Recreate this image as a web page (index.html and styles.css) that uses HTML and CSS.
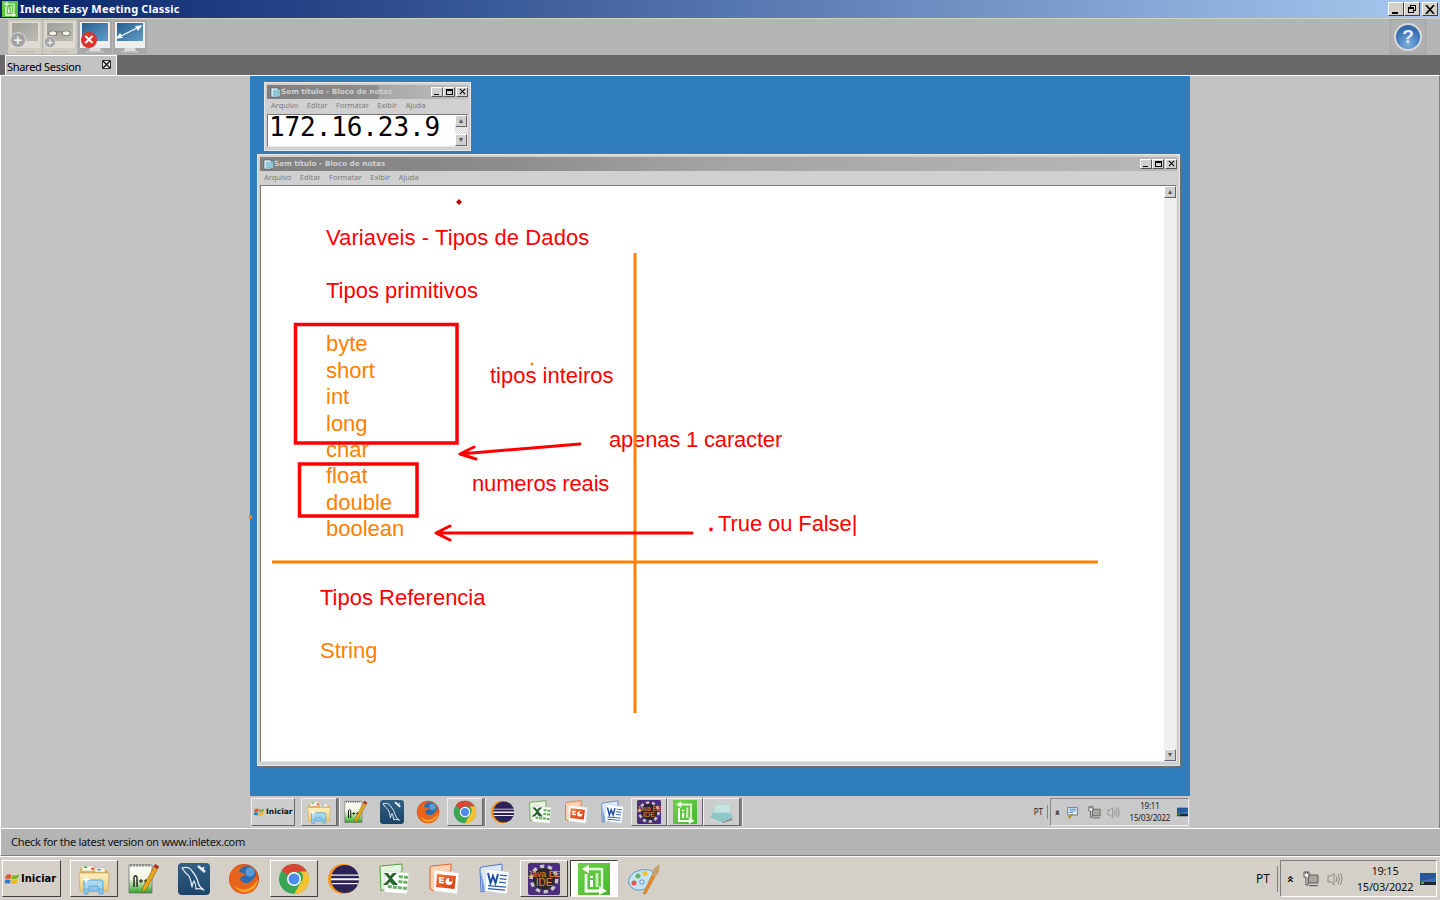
FILE: index.html
```html
<!DOCTYPE html>
<html lang="pt">
<head>
<meta charset="utf-8">
<title>Inletex Easy Meeting Classic</title>
<link rel="stylesheet" href="styles.css">
</head>
<body>
<svg class="defs" aria-hidden="true">
  <defs>
    <linearGradient id="gScreen" x1="0" y1="0" x2="1" y2="1"><stop offset="0" stop-color="#235f90"/><stop offset="1" stop-color="#659cc8"/></linearGradient>
    <linearGradient id="gGray" x1="0" y1="0" x2="1" y2="1"><stop offset="0" stop-color="#a09f98"/><stop offset="1" stop-color="#bcbbb4"/></linearGradient>
    <linearGradient id="gFolder" x1="0" y1="0" x2="0" y2="1"><stop offset="0" stop-color="#fdf0c0"/><stop offset="1" stop-color="#eccb7a"/></linearGradient>
    <linearGradient id="gNpp" x1="0" y1="0" x2="0" y2="1"><stop offset="0" stop-color="#ffffff"/><stop offset=".5" stop-color="#eef7dc"/><stop offset="1" stop-color="#2fa326"/></linearGradient>
    <linearGradient id="gSql" x1="0" y1="0" x2="0" y2="1"><stop offset="0" stop-color="#315f85"/><stop offset="1" stop-color="#1c4468"/></linearGradient>
    <linearGradient id="gPpt" x1="0" y1="0" x2="1" y2="1"><stop offset="0" stop-color="#f27a3c"/><stop offset="1" stop-color="#d8380f"/></linearGradient>
    <linearGradient id="gInl" x1="0" y1="0" x2="1" y2="1"><stop offset="0" stop-color="#6fd04a"/><stop offset="1" stop-color="#45b82e"/></linearGradient>
    <radialGradient id="gFox" cx=".45" cy=".5" r=".55"><stop offset="0" stop-color="#ffb02e"/><stop offset="1" stop-color="#d9471b"/></radialGradient>
    <symbol id="i-mac" viewBox="0 0 34 34"><path d="M2 2h30v26H2z" fill="#eeeeee"/><path d="M4 3h26v18H4z" fill="url(#gScreen)"/><path d="M12 28h10l1 3H11z" fill="#dcdcdc"/><path d="M8 31h18v1.500H8z" fill="#c4c4c4"/></symbol>
    <symbol id="i-mac-off" viewBox="0 0 34 34"><path d="M2 2h30v26H2z" fill="#dedcd4"/><path d="M4 3h26v18H4z" fill="url(#gGray)"/><path d="M12 28h10l1 3H11z" fill="#cfcdc5"/><path d="M8 31h18v1.500H8z" fill="#bdbbb3"/></symbol>
    <symbol id="i-folder" viewBox="0 0 32 32"><path d="M2 5h9l2 2h17v19H2z" fill="#d8b468"/><path d="M4 3h11v5H4zM17 5h10v4H17z" fill="#f8f6ec" stroke="#c9b480" stroke-width=".5"/><path d="M6 3.500h3v1.500H6z" fill="#39a845"/><path d="M13 5h3v1.500h-3z" fill="#d8402e"/><path d="M19 6h4v1.500h-4z" fill="#5aa0e0"/><path d="M1 10h30l-1 18H2z" fill="url(#gFolder)" stroke="#c9a458" stroke-width=".7"/><path d="M6 26v-7q0-2 2-2h15q2 0 2 2v7" fill="#a8d8f0" stroke="#5aa4d8"/><path d="M6 31v-5h5v-3h9v3h5v5h-4v-3H10v3z" fill="#8cc8ec" stroke="#4f9bd0" stroke-width=".7"/><path d="M8 12l1 3.500 3.500 1-3.500 1-1 3.500-1-3.500-3.500-1 3.500-1z" fill="#fff"/></symbol>
    <symbol id="i-npp" viewBox="0 0 32 32"><path d="M1 2h23v28H1z" fill="url(#gNpp)" stroke="#6e6e6e" stroke-width=".8"/><path d="M3 1v3M6 1v3M9 1v3M12 1v3M15 1v3M18 1v3M21 1v3" stroke="#666"/><path d="M6 24V14q1.500-2.500 3 0v10" fill="none" stroke="#111" stroke-width="1.300"/><path d="M11 18h4M13 16v4M16 18h4M18 16v4" stroke="#111" stroke-width="1"/><path d="M27 2l3.500 2-12 22-4.500 4 1-6z" fill="#e9a81c" stroke="#7c5a10" stroke-width=".6"/><path d="M27 1l4 2.300-1.500 2.700-4-2.300z" fill="#a8322a"/></symbol>
    <symbol id="i-mysql" viewBox="0 0 32 32"><rect x="0" y="0" width="32" height="32" rx="4" fill="url(#gSql)"/><path d="M4 5q7-2 10 3 5 6 6 11 1 5 6 8-5-2-8-1 0-5-2-8-2 3-2 6-1-7-3-11-4-3-7-8z" fill="none" stroke="#dfeaf4" stroke-width="1.300" stroke-linejoin="round"/><path d="M20 3l7 6" stroke="#e8f0f6" stroke-width="2.400"/><path d="M26 4l-2 3" stroke="#e8f0f6" stroke-width="1.600"/></symbol>
    <symbol id="i-fox" viewBox="0 0 32 32"><circle cx="16" cy="16" r="15" fill="url(#gFox)"/><circle cx="19" cy="12" r="9" fill="#2c6bb0"/><circle cx="22" cy="9" r="4.500" fill="#5b9bd8"/><path d="M1 17Q2 7 10 2 7 6 9 10q5-2 9 2-4 1-6 3 1 5 6 5 6 0 9-7 2 3 3 5-1 12-14 13Q3 30 1 17z" fill="#e8641c"/><path d="M6 22q6 6 13 4 7-2 11-10-1 11-12 13-8 1-12-7z" fill="#f5a623"/></symbol>
    <symbol id="i-chrome" viewBox="0 0 32 32"><circle cx="16" cy="16" r="15" fill="#3aa655"/><path d="M16 1a15 15 0 0 1 13 7.500H16a7.500 7.500 0 0 0-6.500 3.800L3.500 7A15 15 0 0 1 16 1z" fill="#dc4437"/><path d="M29 8.500A15 15 0 0 1 16 31l6.500-11.200a7.500 7.500 0 0 0 0-11.300z" fill="#fbc02d"/><circle cx="16" cy="16" r="7" fill="#fff"/><circle cx="16" cy="16" r="5.500" fill="#4b8bf0"/></symbol>
    <symbol id="i-eclipse" viewBox="0 0 32 32"><circle cx="15" cy="16" r="15" fill="#f7941e"/><circle cx="17" cy="16" r="14" fill="#2c2255"/><path d="M3 11.500h28v1.300H3zM3 15.200h28v2H3zM4 20h26v1.300H4z" fill="#f2f2f8"/></symbol>
    <symbol id="i-excel" viewBox="0 0 32 32"><path d="M2 4q0-1 1-1l21-2v7L7 26l-4 2z" fill="#e6f3e0" stroke="#4d9f3f"/><path d="M7 8l24 2-2 21-23-2z" fill="#fff" stroke="#c8d4c8" stroke-width=".6"/><path d="M21 12l4 .400-.300 3-4-.400zM26 12.500l4 .400-.300 3-4-.400zM20.500 17l4 .400-.300 3-4-.400zM25.500 17.500l4 .400-.300 3-4-.400zM10 22l4 .400-.300 3-4-.400zM15 22.500l4 .400-.300 3-4-.400zM20 23l4 .400-.300 3-4-.400zM25 23.500l4 .400-.300 3-4-.400z" fill="#6fae68"/><path d="M6 8l10 1M6 10l5 6-6 6h4l3-3 3 3h5l-6-7 5-5h-4l-3 3-2-3z" fill="#27642c"/></symbol>
    <symbol id="i-ppt" viewBox="0 0 32 32"><path d="M2 5q0-2 2-2l19-2v6L6 28l-4-2z" fill="#fbd3b0" stroke="#e8612c"/><path d="M6 7l25 3-2 21-23-3z" fill="#fff" stroke="#d8d2cc" stroke-width=".6"/><path d="M9 11l19 2-1.500 13L8 24z" fill="url(#gPpt)"/><path d="M11 14l5 .500v1.300l-3.500-.300v1l3 .300v1.300l-3-.300v1l3.500.300v1.300l-5-.500z" fill="#fff"/><circle cx="21" cy="18.500" r="3.500" fill="#fff"/><path d="M21 18.500v-3.500a3.500 3.500 0 0 1 3.500 3.500z" fill="#e24d1c"/></symbol>
    <symbol id="i-word" viewBox="0 0 32 32"><path d="M2 6q0-2 2-2l20-3v6L7 28l-4 1z" fill="#dce8f8" stroke="#4f78bf"/><path d="M3 8l4 19-3 1z" fill="#6f97d6"/><path d="M8 6l23 3-2 22-22-3z" fill="#fff" stroke="#ccd4e2" stroke-width=".6"/><path d="M10 10l2.500 10 2.500-7 2.500 7 2.500-9" fill="none" stroke="#1f4fa3" stroke-width="2"/><path d="M22 11.500l7 .700v1.300l-7-.700zM21.500 15l7 .700V17l-7-.700zM21 18.500l7 .700v1.300l-7-.700zM10 22l18 1.500v1.300L10 23.300zM10 25l17 1.500v1.300L10 26.300z" fill="#2c5cb0"/></symbol>
    <symbol id="i-java" viewBox="0 0 32 32"><rect x="0" y="0" width="32" height="32" rx="2" fill="#4a2d7c"/><circle cx="16" cy="16" r="12.500" fill="none" stroke="#c4c4c4" stroke-width="4" stroke-dasharray="4.200 3.600"/><circle cx="16" cy="16" r="11" fill="#2a2630"/><text class="java-t" x="16" y="14">Java EE</text><text class="java-t java-b" x="16" y="23">IDE</text></symbol>
    <symbol id="i-inletex" viewBox="0 0 32 32"><rect width="32" height="32" fill="url(#gInl)"/><path d="M10 6h14v20" fill="none" stroke="#e8f8dc" stroke-width="2.400"/><path d="M4 6l7-4.500v9z" fill="#f2fbe8"/><path d="M8 11v17h14" fill="none" stroke="#f8fff2" stroke-width="2.800"/><path d="M21 23l8 5-8 4z" fill="#f2fbe8"/><path d="M12 13h3v2h-3zM12 17h3v7h-3z" fill="#fff"/><path d="M17.500 10h3v14h-3z" fill="#c8eeb8"/></symbol>
    <symbol id="i-paint" viewBox="0 0 32 32"><path d="M1 21q-2-7 6-12 8-4 15-2 5 2 1 8-2 2-2 5l-4 6q-11 4-16-5z" fill="#c4e2f2" stroke="#5a9cc6"/><circle cx="6" cy="20" r="2.500" fill="#e0584a"/><circle cx="10" cy="13" r="2.500" fill="#68b060"/><circle cx="17" cy="10.500" r="2.500" fill="#f2c230"/><circle cx="14" cy="19" r="2.200" fill="#dcebf4" stroke="#5a8cc6"/><path d="M15 31l9-19 3 1.500-9 17z" fill="#e9892a" stroke="#c06a18" stroke-width=".5"/><path d="M24 12q0-6 4-8l3-3q1 6-1 10l-3 2.500z" fill="#c8a070"/></symbol>
    <symbol id="i-notes" viewBox="0 0 32 32"><path d="M2 24L9 6h18l4 18-14 6z" fill="#8ec7c9"/><path d="M9 6h18l2 11H6z" fill="#c6e4de"/><path d="M17 30l14-6v3l-14 4z" fill="#8a8a8a"/><path d="M2 24l15 6v2L2 26z" fill="#d8d8d8"/></symbol>
    <symbol id="i-flag" viewBox="0 0 16 14"><path d="M1 3q3-2 6 0l-1 4q-3-1-6 0z" fill="#e8562a"/><path d="M8 3q3 1 7-1l-1 4q-4 2-7 1z" fill="#7ab51d"/><path d="M0 8q3-1 6 0l-1 4q-3-1-6 0z" fill="#2f78d0"/><path d="M7 8q3 1 7-1l-1 4q-4 2-7 1z" fill="#f5b81c"/></symbol>
    <symbol id="i-net" viewBox="0 0 16 16"><path d="M5 4h10v8H5z" fill="#a8a69e" stroke="#555" stroke-width=".9"/><path d="M1 1h5v5H5v8H3V6H1z" fill="#f6f6f2" stroke="#444" stroke-width=".9"/><path d="M2.500 1v2M4.500 1v2" stroke="#444" stroke-width=".8"/><path d="M6 14h9v1.200H6z" fill="#666"/></symbol>
    <symbol id="i-vol" viewBox="0 0 16 16"><path d="M1 5h3l3-3v12l-3-3H1z" fill="#cfcdc6" stroke="#8a8a86"/><path d="M9 5q2 3 0 6M11 3q3 5 0 10M13 2q4 6 0 12" fill="none" stroke="#8a8a86"/></symbol>
    <symbol id="i-desk" viewBox="0 0 16 14"><path d="M0 1h16v12H0z" fill="#3b6fb4"/><path d="M0 1h16v5L0 9z" fill="#2a5797"/><path d="M0 10h16v3H0z" fill="#22252c"/><path d="M1 10h3v2H1z" fill="#58a83c"/></symbol>
    <symbol id="i-pad" viewBox="0 0 12 12"><path d="M1 1h8v10H1z" fill="#e8f4f8" stroke="#567"/><path d="M3 3h8v7H3z" fill="#8ec7d8"/></symbol>
  </defs>
</svg>

<div class="app">
  <header class="titlebar">
    <svg class="title-icon"><use href="#i-inletex"/></svg>
    <span class="title-text">Inletex Easy Meeting Classic</span>
    <div class="wincaps">
      <span class="cap"><i class="g-min"></i></span>
      <span class="cap"><i class="g-rest"></i></span>
      <span class="cap cap-gap"><svg class="g-x" viewBox="0 0 10 9"><path d="M1 0l8 9M9 0L1 9"/></svg></span>
    </div>
  </header>

  <div class="toolbar">
    <button class="tb-btn tb-off"><svg class="tb-ic"><use href="#i-mac-off"/></svg><span class="badge-plus">+</span></button>
    <button class="tb-btn tb-off"><svg class="tb-ic"><use href="#i-mac-off"/></svg><svg class="tb-glasses" viewBox="0 0 26 10"><path d="M2 4q4-3 8 0v3q-4 2-8 0zM16 4q4-3 8 0v3q-4 2-8 0zM10 4q3-1 6 0" fill="#f1f0ea" stroke="#77756e"/></svg><span class="badge-plus badge-small">+</span></button>
    <button class="tb-btn"><svg class="tb-ic"><use href="#i-mac"/></svg><span class="badge-x">×</span></button>
    <button class="tb-btn"><svg class="tb-ic"><use href="#i-mac"/></svg><svg class="tb-arrow" viewBox="0 0 28 16"><path d="M2 14L26 2M2 14l5-.500-2-3.500zM26 2l-5 .500 2 3.500z" stroke="#fff" stroke-width="1.200" fill="#fff"/></svg></button>
    <button class="help-btn"><span class="help-ball">?</span></button>
  </div>

  <div class="tabstrip">
    <div class="tab"><span class="tab-label">Shared Session</span><svg class="tab-x" viewBox="0 0 9 9"><path d="M.5.500h8v8h-8z" fill="#e8e8e8" stroke="#333"/><path d="M1 1l7 7M8 1L1 8" stroke="#111" stroke-width="1.300"/></svg></div>
  </div>

  <main class="workspace">
    <section class="remote">
      <div class="desktop">
        <div class="np np-small">
          <div class="np-title"><svg class="np-ic"><use href="#i-pad"/></svg><span class="np-title-t">Sem título - Bloco de notas</span>
            <div class="np-caps"><span class="ncap"><i class="n-min"></i></span><span class="ncap"><i class="n-max"></i></span><span class="ncap ncap-gap"><svg class="n-x" viewBox="0 0 8 8"><path d="M1 1l6 6M7 1L1 7"/></svg></span></div>
          </div>
          <div class="np-menu"><span>Arquivo</span><span>Editar</span><span>Formatar</span><span>Exibir</span><span>Ajuda</span></div>
          <div class="np-client np-client-small">
            <div class="ip">172.16.23.9</div>
            <div class="vscroll"><span class="sb-btn">▴</span><span class="sb-track"></span><span class="sb-btn">▾</span></div>
          </div>
        </div>

        <div class="np np-large">
          <div class="np-title"><svg class="np-ic"><use href="#i-pad"/></svg><span class="np-title-t">Sem título - Bloco de notas</span>
            <div class="np-caps"><span class="ncap"><i class="n-min"></i></span><span class="ncap"><i class="n-max"></i></span><span class="ncap ncap-gap"><svg class="n-x" viewBox="0 0 8 8"><path d="M1 1l6 6M7 1L1 7"/></svg></span></div>
          </div>
          <div class="np-menu"><span>Arquivo</span><span>Editar</span><span>Formatar</span><span>Exibir</span><span>Ajuda</span></div>
          <div class="np-client np-client-large">
            <div class="board">
              <span class="wb red w1">Variaveis - Tipos de Dados</span>
              <span class="wb red w2">Tipos primitivos</span>
              <span class="wb org w3">byte</span>
              <span class="wb org w4">short</span>
              <span class="wb org w5">int</span>
              <span class="wb org w6">long</span>
              <span class="wb org w7">char</span>
              <span class="wb org w8">float</span>
              <span class="wb org w9">double</span>
              <span class="wb org w10">boolean</span>
              <span class="wb red w11">tipos inteiros</span>
              <span class="wb red w12">apenas 1 caracter</span>
              <span class="wb red w13">numeros reais</span>
              <span class="wb red w14"><b class="dotb">.</b>True ou False|</span>
              <span class="wb red w15">Tipos Referencia</span>
              <span class="wb org w16">String</span>
              <svg class="ink" viewBox="0 0 903 577">
                <g fill="none">
                  <path class="ink-o" d="M374 67V527M11 376H837"/>
                  <path class="ink-r" d="M34.500 138.500H196V257H34.500zM38.500 278H156V330H38.500z"/>
                  <path class="ink-a" d="M319 258L199 268M213 261L199 268L215 273M431 347H175M189 340L175 347L189 354"/>
                </g>
                <path d="M198 13l3 3-3 3-3-3z" fill="#c00000"/>
                <circle cx="271" cy="178" r="1.500" fill="#ff8000"/>
              </svg>
            </div>
            <div class="vscroll vscroll-large"><span class="sb-btn">▴</span><span class="sb-track"></span><span class="sb-btn">▾</span></div>
          </div>
        </div>
        <i class="edge-dot"></i>
      </div>

      <div class="r-taskbar">
        <button class="r-start"><svg class="r-flag"><use href="#i-flag"/></svg>Iniciar</button>
        <div class="r-slots">
          <span class="r-slot r-up"><svg><use href="#i-folder"/></svg></span><i class="r-grip r-grip-flat"></i>
          <span class="r-slot"><svg><use href="#i-npp"/></svg></span>
          <span class="r-slot"><svg><use href="#i-mysql"/></svg></span>
          <span class="r-slot"><svg><use href="#i-fox"/></svg></span>
          <span class="r-slot r-up"><svg><use href="#i-chrome"/></svg></span><i class="r-grip"></i>
          <span class="r-slot"><svg><use href="#i-eclipse"/></svg></span>
          <span class="r-slot"><svg><use href="#i-excel"/></svg></span>
          <span class="r-slot"><svg><use href="#i-ppt"/></svg></span>
          <span class="r-slot"><svg><use href="#i-word"/></svg></span>
          <span class="r-slot r-up"><svg><use href="#i-java"/></svg></span>
          <span class="r-slot r-up"><svg><use href="#i-inletex"/></svg></span>
          <span class="r-slot r-up"><svg><use href="#i-notes"/></svg></span><i class="r-grip"></i>
        </div>
        <span class="r-lang">PT</span>
        <div class="r-tray">
          <span class="r-chev">»</span>
          <svg class="r-ti r-ti-a" viewBox="0 0 16 16"><path d="M2 2h12v9H2z" fill="#e8f2fa" stroke="#567"/><path d="M4 4h8M4 6h8M4 8h5" stroke="#3a7cc0"/><path d="M3 15l5-5" stroke="#b8860b" stroke-width="2"/></svg>
          <svg class="r-ti r-ti-n"><use href="#i-net"/></svg>
          <svg class="r-ti"><use href="#i-vol"/></svg>
          <div class="r-clock"><span>19:11</span><span>15/03/2022</span></div>
          <svg class="r-desk"><use href="#i-desk"/></svg>
        </div>
      </div>
    </section>
  </main>

  <div class="statusbar">Check for the latest version on www.inletex.com</div>

  <footer class="taskbar">
    <button class="start"><svg class="flag"><use href="#i-flag"/></svg>Iniciar</button>
    <div class="slots">
      <span class="slot slot-up"><svg><use href="#i-folder"/></svg></span>
      <span class="slot"><svg><use href="#i-npp"/></svg></span>
      <span class="slot"><svg><use href="#i-mysql"/></svg></span>
      <span class="slot"><svg><use href="#i-fox"/></svg></span>
      <span class="slot slot-up"><svg><use href="#i-chrome"/></svg></span>
      <span class="slot"><svg><use href="#i-eclipse"/></svg></span>
      <span class="slot"><svg><use href="#i-excel"/></svg></span>
      <span class="slot"><svg><use href="#i-ppt"/></svg></span>
      <span class="slot"><svg><use href="#i-word"/></svg></span>
      <span class="slot slot-up"><svg><use href="#i-java"/></svg></span>
      <span class="slot slot-down"><svg><use href="#i-inletex"/></svg></span>
      <span class="slot"><svg><use href="#i-paint"/></svg></span>
    </div>
    <span class="lang">PT</span>
    <div class="tray">
      <span class="chev">»</span>
      <svg class="ti ti-n"><use href="#i-net"/></svg>
      <svg class="ti"><use href="#i-vol"/></svg>
      <div class="clock"><span>19:15</span><span>15/03/2022</span></div>
      <svg class="desk"><use href="#i-desk"/></svg>
    </div>
  </footer>
</div>
</body>
</html>
```

FILE: styles.css
```css
* { box-sizing: border-box; }
html, body { margin: 0; padding: 0; }
body { width: 1440px; height: 900px; overflow: hidden; font-family: "Noto Sans", "DejaVu Sans", sans-serif; background: #c3c3c3; color: #000; }
button { font: inherit; margin: 0; padding: 0; }
.defs { position: absolute; width: 0; height: 0; overflow: hidden; }
.app { display: flex; flex-direction: column; height: 900px; }

/* Host window chrome */
.titlebar { height: 19px; flex: none; display: flex; align-items: flex-start; background: linear-gradient(90deg, #0a246a 0%, #2a4a8c 25%, #a6caf0 100%); border-bottom: 1px solid #d4d0c8; color: #fff; }
.title-icon { width: 16px; height: 16px; margin: 1px 2px 0 2px; flex: none; }
.title-text { font: bold 11px/18px "Noto Sans", sans-serif; letter-spacing: .18px; }
.wincaps { margin-left: auto; display: flex; margin-top: 2px; padding-right: 2px; }
.cap { width: 16px; height: 14px; background: #d4d0c8; border: 1px solid; border-color: #fff #404040 #404040 #fff; display: flex; align-items: center; justify-content: center; position: relative; }
.cap-gap { margin-left: 2px; }
.g-min { width: 6px; height: 2px; background: #000; align-self: flex-end; margin-bottom: 1px; margin-right: 2px; }
.g-rest { width: 6px; height: 6px; border: 1px solid #000; border-top-width: 2px; background: #d4d0c8; display: block; margin: 2px 0 0 -2px; box-shadow: 2px -2px 0 -1px #d4d0c8, 2px -2px 0 0 #000; }
.g-x { width: 10px; height: 9px; stroke: #000; stroke-width: 1.700; fill: none; }

.toolbar { height: 36px; flex: none; display: flex; align-items: flex-start; gap: 1px; padding: 1px 14px 0 8px; background: #b4b4b4; }
.tb-btn { position: relative; width: 34px; height: 34px; border: 0; background: #a8a8a8; display: block; }
.tb-off { background: #cfccc0; }
.tb-ic { width: 34px; height: 34px; display: block; }
.badge-plus { position: absolute; left: 2px; top: 12px; width: 16px; height: 16px; border-radius: 50%; background: #a3a3a3; border: 1px solid #d8d8d8; color: #eee; font: bold 15px/13px "Liberation Sans", sans-serif; text-align: center; }
.badge-small { top: 16px; width: 12px; height: 12px; font-size: 11px; line-height: 10px; left: 1px; }
.badge-x { position: absolute; left: 3px; top: 12px; width: 16px; height: 16px; border-radius: 50%; background: #d9342a; color: #fff; font: bold 17px/15px "Liberation Sans", sans-serif; text-align: center; }
.tb-glasses { position: absolute; left: 4px; top: 8px; width: 25px; height: 10px; }
.tb-arrow { position: absolute; left: 2px; top: 4px; width: 28px; height: 16px; }
.help-btn { margin: -1px 0 0 auto; width: 36px; height: 35px; background: #b0b0b0; border: 1px solid #a2a2a2; display: flex; align-items: center; justify-content: center; }
.help-ball { width: 28px; height: 28px; border-radius: 50%; background: radial-gradient(circle at 50% 80%, #7fb0de, #3a74b6 60%, #2a5a9c); border: 2px solid #d8d8d8; color: #e8eef6; font: bold 19px/24px "Liberation Sans", sans-serif; text-align: center; }

.tabstrip { height: 20px; flex: none; background: #696969; padding-left: 5px; display: flex; }
.tab { width: 112px; height: 20px; background: #c3c3c3; border: 1px solid #fff; border-bottom: 0; display: flex; align-items: flex-start; padding-left: 1px; position: relative; }
.tab-label { font: 11px/22px "Noto Sans", sans-serif; letter-spacing: -.3px; }
.tab-x { position: absolute; right: 5px; top: 4px; width: 9px; height: 9px; }

.workspace { flex: 1; min-height: 0; display: flex; justify-content: center; background: #c3c3c3; border-top: 1px solid #fff; border-left: 1px solid #fff; border-right: 1px solid #808080; }
.remote { width: 940px; display: flex; flex-direction: column; background: #2f7dbd; }
.desktop { flex: 1; position: relative; min-height: 0; }
.edge-dot { position: absolute; left: -1px; top: 439px; width: 3px; height: 4px; background: #ff8000; }

/* Notepad windows on the remote desktop */
.np { position: absolute; display: flex; flex-direction: column; background: #d0d0d0; border: 1px solid #e6e6e6; box-shadow: 1px 1px 0 #6e6e6e; padding: 2px 2px 3px 2px; }
.np-small { left: 14px; top: 6px; width: 207px; height: 69px; }
.np-large { left: 7px; top: 78px; width: 923px; height: 612px; }
.np-title { height: 14px; flex: none; display: flex; align-items: center; padding-left: 3px; background: linear-gradient(90deg, #808080 0%, #8e8e8e 55%, #a6a6a6 56%, #c0c0c0 100%); }
.np-large .np-title { background: linear-gradient(90deg, #808080 0%, #8b8b8b 25%, #a4a4a4 50%, #b8b8b8 100%); }
.np-ic { width: 11px; height: 11px; flex: none; }
.np-title-t { font: bold 7.300px/14px "DejaVu Sans", sans-serif; color: #cfcfcf; white-space: nowrap; }
.np-caps { margin-left: auto; display: flex; margin-top: -1px; }
.ncap { width: 12px; height: 10px; background: #d0d0d0; border: 1px solid; border-color: #fff #555 #555 #fff; display: flex; align-items: center; justify-content: center; }
.ncap-gap { margin-left: 1px; }
.n-min { width: 5px; height: 1px; background: #000; align-self: flex-end; margin-bottom: 1px; margin-right: 2px; }
.n-max { width: 7px; height: 6px; border: 1px solid #000; border-top-width: 2px; display: block; }
.n-x { width: 7px; height: 7px; stroke: #000; stroke-width: 1.200; fill: none; }
.np-menu { height: 14px; flex: none; display: flex; gap: 8.500px; padding-left: 4px; font: 7.500px/12px "Noto Sans", sans-serif; color: #7c7c7c; }
.np-client { flex: 1; min-height: 0; display: flex; background: #fff; border: 1px solid; border-color: #777 #e4e4e4 #e4e4e4 #777; }
.np-client-small { margin-top: 1px; }
.ip { flex: 1; font: 26px/24px "DejaVu Sans Mono", monospace; padding-left: 1px; letter-spacing: -.1px; color: #000; white-space: nowrap; }
.vscroll { width: 12px; flex: none; display: flex; flex-direction: column; background: #e8e8e8; }
.sb-btn { height: 12px; flex: none; background: #d0d0d0; border: 1px solid; border-color: #fff #666 #666 #fff; font: 8px/9px "DejaVu Sans", sans-serif; color: #555; text-align: center; }
.sb-track { flex: 1; background: repeating-conic-gradient(#d8d8d8 0 25%, #f2f2f2 0 50%) 0 0 / 2px 2px; }
.vscroll-large .sb-track { background: #efefef; }
.board { flex: 1; position: relative; min-width: 0; background: #fff; }
.wb { position: absolute; font: 22px/26px "Liberation Sans", Arial, sans-serif; white-space: nowrap; }
.red { color: #ff0000; }
.org { color: #ff8000; }
.dotb { font-weight: 700; margin-right: 4px; }
.w1 { left: 65px; top: 39px; letter-spacing: .08px; }
.w2 { left: 65px; top: 92px; }
.w3 { left: 65px; top: 145px; }
.w4 { left: 65px; top: 172px; }
.w5 { left: 65px; top: 198px; }
.w6 { left: 65px; top: 225px; }
.w7 { left: 65px; top: 251px; }
.w8 { left: 65px; top: 277px; }
.w9 { left: 65px; top: 304px; }
.w10 { left: 65px; top: 330px; }
.w11 { left: 229px; top: 177px; }
.w12 { left: 348px; top: 241px; letter-spacing: -.18px; }
.w13 { left: 211px; top: 285px; letter-spacing: -.17px; }
.w14 { left: 447px; top: 325px; letter-spacing: -.1px; }
.w15 { left: 59px; top: 399px; }
.w16 { left: 59px; top: 452px; }
.ink { position: absolute; left: 0; top: 0; width: 903px; height: 577px; }
.ink-o { stroke: #ff8000; stroke-width: 3; }
.ink-r { stroke: #ff0000; stroke-width: 3.500; }
.ink-a { stroke: #ff0000; stroke-width: 3; stroke-linecap: round; stroke-linejoin: round; }

/* Remote taskbar */
.r-taskbar { height: 32px; flex: none; display: flex; align-items: center; background: #c9c9c9; padding-left: 1px; }
.r-start { width: 44px; height: 28px; flex: none; display: flex; align-items: center; background: #cdcdcd; border: 1px solid; border-color: #eee #666 #666 #eee; font: bold 7.500px/1 "DejaVu Sans", sans-serif; color: #111; }
.r-flag { width: 11px; height: 10px; margin: 0 1px 0 2px; flex: none; }
.r-slots { display: flex; align-items: center; margin-left: 6px; height: 28px; }
.r-slot { width: 36.400px; height: 28px; display: flex; align-items: center; justify-content: center; flex: none; border: 1px solid transparent; }
.r-slot svg { width: 24px; height: 24px; display: block; }
.r-up { background: #cdcdcd; border-color: #eee #666 #666 #eee; }
.r-grip { width: 3px; height: 28px; margin-right: -1px; background: #808080; border-right: 1px solid #eee; flex: none; }
.r-grip-flat { margin-right: -3px; position: relative; }
.r-lang { margin-left: auto; font: 8px/14px "Noto Sans", sans-serif; color: #222; padding-right: 4px; border-right: 1px solid #888; }
.r-tray { width: 139px; height: 28px; margin-left: 2px; margin-right: 1px; flex: none; display: flex; align-items: center; border: 1px solid; border-color: #888 #eee #eee #888; padding-left: 4px; }
.r-chev { font: bold 9px/1 "DejaVu Sans", sans-serif; transform: rotate(-90deg); width: 6px; margin-right: 5px; }
.r-ti { width: 13px; height: 13px; flex: none; margin-right: 6px; }
.r-ti-a { margin-right: 9px; }
.r-clock { display: flex; flex-direction: column; align-items: center; font: 8px/12px "Noto Sans", sans-serif; letter-spacing: -.2px; color: #222; margin-left: 1px; width: 50px; }
.r-desk { width: 12px; height: 10px; margin-left: 4px; }

/* Status bar */
.statusbar { height: 28px; flex: none; background: #b4b4b4; border-top: 1px solid #fff; border-bottom: 1px solid #808080; border-left: 1px solid #fff; padding-left: 10px; font: 11px/26px "Noto Sans", sans-serif; letter-spacing: -.3px; color: #111; }

/* Host taskbar */
.taskbar { height: 44px; flex: none; display: flex; align-items: center; background: #d4d0c8; border-top: 1px solid #fff; padding: 0 3px 0 2px; }
.start { width: 59px; height: 37px; flex: none; display: flex; align-items: center; background: #d4d0c8; border: 1px solid; border-color: #fff #404040 #404040 #fff; font: bold 10px/1 "DejaVu Sans", sans-serif; color: #000; }
.flag { width: 15px; height: 14px; margin: 0 1px 0 2px; flex: none; }
.slots { display: flex; gap: 2px; margin-left: 9px; }
.slot { width: 48px; height: 37px; display: flex; align-items: center; justify-content: center; border: 1px solid transparent; flex: none; }
.slot svg { width: 32px; height: 32px; display: block; }
.slot-up { border-color: #fff #404040 #404040 #fff; }
.slot-down { border-color: #404040 #fff #fff #404040; background: #fff; }
.lang { margin-left: auto; font: 12px/26px "Noto Sans", sans-serif; color: #111; padding-right: 7px; border-right: 1px solid #808080; height: 26px; }
.tray { width: 157px; height: 37px; margin-left: 2px; flex: none; display: flex; align-items: center; border: 1px solid; border-color: #808080 #fff #fff #808080; padding-left: 5px; }
.chev { font: bold 12px/1 "DejaVu Sans", sans-serif; transform: rotate(-90deg); width: 8px; margin-right: 9px; }
.ti { width: 16px; height: 16px; flex: none; margin-right: 8px; }
.clock { display: flex; flex-direction: column; align-items: center; font: 11px/16px "Noto Sans", sans-serif; letter-spacing: -.2px; color: #111; width: 60px; margin-left: 4px; }
.desk { width: 16px; height: 14px; margin-left: 5px; flex: none; }
.java-t { font: 8.800px "Liberation Sans", sans-serif; fill: #f08a2a; text-anchor: middle; }
.java-b { font-size: 10px; }
```
